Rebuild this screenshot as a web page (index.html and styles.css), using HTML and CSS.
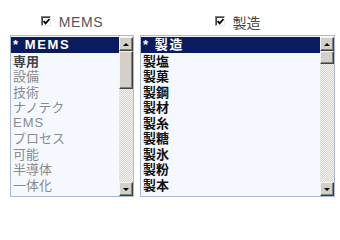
FILE: index.html
```html
<!DOCTYPE html>
<html lang="ja">
<head>
<meta charset="utf-8">
<link rel="stylesheet" href="styles.css">
</head>
<body>
<div class="wrap">
  <div class="col col-left">
    <label class="head"><span class="cb"><svg width="7" height="7" viewBox="0 0 7 7"><path d="M0.6 3.1 L2.6 5.4 L6.5 1.0" fill="none" stroke="#000" stroke-width="1.8"/></svg></span><span class="head-text latin">MEMS</span></label>
    <div class="listbox">
      <div class="items">
        <div class="item sel">* MEMS</div>
        <div class="item dark">専用</div>
        <div class="item">設備</div>
        <div class="item">技術</div>
        <div class="item">ナノテク</div>
        <div class="item latin-item">EMS</div>
        <div class="item">プロセス</div>
        <div class="item">可能</div>
        <div class="item">半導体</div>
        <div class="item">一体化</div>
      </div>
      <div class="scroll">
        <div class="btn"><span class="arrow up"></span></div>
        <div class="thumb thumb-left"></div>
        <div class="track"></div>
        <div class="btn"><span class="arrow down"></span></div>
      </div>
    </div>
  </div>
  <div class="col col-right">
    <label class="head"><span class="cb"><svg width="7" height="7" viewBox="0 0 7 7"><path d="M0.6 3.1 L2.6 5.4 L6.5 1.0" fill="none" stroke="#000" stroke-width="1.8"/></svg></span><span class="head-text">製造</span></label>
    <div class="listbox">
      <div class="items bold">
        <div class="item sel">* 製造</div>
        <div class="item">製塩</div>
        <div class="item">製菓</div>
        <div class="item">製鋼</div>
        <div class="item">製材</div>
        <div class="item">製糸</div>
        <div class="item">製糖</div>
        <div class="item">製氷</div>
        <div class="item">製粉</div>
        <div class="item">製本</div>
      </div>
      <div class="scroll">
        <div class="btn"><span class="arrow up"></span></div>
        <div class="thumb thumb-right"></div>
        <div class="track"></div>
        <div class="btn"><span class="arrow down"></span></div>
      </div>
    </div>
  </div>
</div>
</body>
</html>
```
FILE: styles.css
```css
html, body {
  margin: 0;
  padding: 0;
  background: #ffffff;
}
body {
  font-family: "Noto Sans CJK JP", "Liberation Sans", sans-serif;
  font-size: 13px;
  color: #222;
}
.wrap {
  display: flex;
  gap: 6px;
  padding: 15px 0 0 10px;
}
.col {
  display: flex;
  flex-direction: column;
  align-items: center;
}
.col-left .listbox { width: 124px; }
.col-right .listbox { width: 195px; }
.head {
  display: flex;
  align-items: center;
  gap: 8px;
  height: 14px;
  margin-bottom: 6px;
  color: #333;
}
.cb {
  box-sizing: border-box;
  width: 10px;
  height: 10px;
  border: 1px solid;
  border-color: #808080 #e8e8e8 #e8e8e8 #808080;
  background: #fff;
  display: flex;
  align-items: center;
  justify-content: center;
  box-shadow: inset 1px 1px 0 #404040;
  padding: 1px 0 0 1px;
  margin-top: -2px;
}
.cb svg { display: block; }
.head-text {
  font-size: 14px;
  line-height: 14px;
  color: #444;
}
.head-text.latin {
  font-family: "Liberation Sans", sans-serif;
  letter-spacing: 0.6px;
  color: #555;
}
.listbox {
  height: 162px;
  box-sizing: border-box;
  border: 1px solid #a9b9d3;
  display: flex;
  background: #f5f9ff;
}
.items {
  flex: 1;
  padding-top: 1px;
  overflow: hidden;
  color: #8a8a8a;
}
.items.bold {
  font-weight: 700;
  color: #111;
}
.item {
  height: 15.5px;
  line-height: 15.5px;
  padding-left: 2px;
  white-space: nowrap;
}
.item.dark {
  color: #444;
  font-weight: 700;
}
.latin-item {
  font-family: "Liberation Sans", sans-serif;
  letter-spacing: 1px;
}
.item.sel {
  background: #0b1c5e;
  color: #fff;
  font-weight: 700;
  font-family: "Liberation Sans", "Noto Sans CJK JP", sans-serif;
  letter-spacing: 1.6px;
}
.scroll {
  width: 14px;
  display: flex;
  flex-direction: column;
  padding-top: 1px;
}
.btn, .thumb {
  box-sizing: border-box;
  background: #d4d0c8;
  border: 1px solid;
  border-color: #f4f4f4 #404040 #404040 #f4f4f4;
  box-shadow: inset -1px -1px 0 #808080;
}
.btn {
  height: 14px;
  display: flex;
  align-items: center;
  justify-content: center;
}
.thumb-left { height: 38px; }
.thumb-right { height: 13px; }
.track {
  flex: 1;
  background: repeating-conic-gradient(#d8d5ce 0 25%, #f4f3f0 0 50%) 0 0 / 2px 2px;
}
.arrow {
  width: 0;
  height: 0;
  border-left: 3px solid transparent;
  border-right: 3px solid transparent;
}
.arrow.up { border-bottom: 3px solid #000; }
.arrow.down { border-top: 3px solid #000; }
```
